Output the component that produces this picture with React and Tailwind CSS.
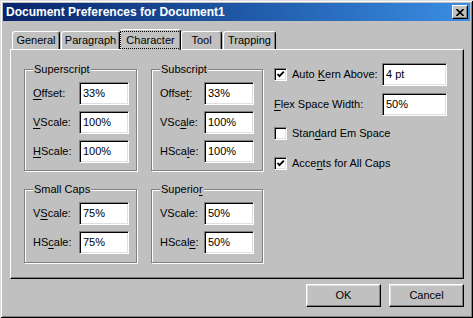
import React from "react";

const font = { fontFamily: '"Liberation Sans", Arial, sans-serif' };

const Field = ({ value, w = "w-[50px]" }) => (
  <div
    className={`${w} h-[23px] bg-white border border-t-[#808080] border-l-[#808080] border-r-white border-b-white shadow-[inset_1px_1px_0_#000,inset_-1px_-1px_0_#dfdfdf] pl-[3px] pt-[4px] text-[11px] leading-[13px] text-black`}
  >
    {value}
  </div>
);

const Check = ({ checked }) => (
  <div className="w-[13px] h-[13px] shrink-0 bg-white border border-t-[#808080] border-l-[#808080] border-r-white border-b-white shadow-[inset_1px_1px_0_#000,inset_-1px_-1px_0_#dfdfdf] flex items-center justify-center">
    {checked && (
      <svg width="9" height="9" viewBox="0 0 9 9">
        <path d="M1.5 4 L3.5 6.2 L7.8 1.6" fill="none" stroke="#000" strokeWidth="1.8" />
      </svg>
    )}
  </div>
);

// label with one underlined letter (mnemonic)
const Mn = ({ text, at }) =>
  at < 0 ? (
    <>{text}</>
  ) : (
    <>
      {text.slice(0, at)}
      <span className="underline underline-offset-[2px]">{text[at]}</span>
      {text.slice(at + 1)}
    </>
  );

const Group = ({ title, titleAt = -1, rows, labelW, h }) => (
  <div
    className={`relative ${h} border border-[#808080] shadow-[1px_1px_0_#fff,inset_1px_1px_0_#fff] pt-[12px] pl-[8px] flex flex-col gap-[6px]`}
  >
    <span className="absolute top-[-8px] left-[8px] px-[1px] bg-[#c0c0c0] text-[11px] leading-[14px]">
      <Mn text={title} at={titleAt} />
    </span>
    {rows.map((r) => (
      <div key={r.label} className="flex items-center">
        <span className={`${labelW} text-[11px] leading-[13px]`}>
          <Mn text={r.label} at={r.at} />
        </span>
        <Field value={r.value} />
      </div>
    ))}
  </div>
);

const Tab = ({ label, w, ml = "" }) => (
  <div
    className={`${w} ${ml} h-[18px] rounded-t-[3px] border-l border-t border-r border-l-white border-t-white border-r-black shadow-[inset_-1px_0_0_#808080] text-[11px] leading-[13px] flex justify-center pt-[2px]`}
  >
    {label}
  </div>
);

const RaisedButton = ({ children }) => (
  <div className="w-[75px] h-[23px] border border-t-white border-l-white border-r-black border-b-black shadow-[inset_-1px_-1px_0_#808080,inset_1px_1px_0_#dfdfdf] flex items-center justify-center text-[11px] leading-[13px]">
    {children}
  </div>
);

export default function App() {
  return (
    <div
      className="w-[473px] h-[318px] bg-[#c0c0c0] p-[3px] text-black shadow-[inset_1px_1px_0_#dfdfdf,inset_-1px_-1px_0_#000,inset_2px_2px_0_#fff,inset_-2px_-2px_0_#808080] overflow-hidden"
      style={font}
    >
      {/* Title bar */}
      <div className="h-[18px] flex items-center justify-between pl-[3px] pr-[2px] bg-linear-to-r from-[#0a246a] to-[#3a8ee4]">
        <span className="text-white font-bold text-[12px] leading-[14px]">
          Document Preferences for Document1
        </span>
        <div className="w-[16px] h-[14px] bg-[#c0c0c0] border border-t-white border-l-white border-r-black border-b-black shadow-[inset_-1px_-1px_0_#808080] flex items-center justify-center">
          <svg width="8" height="7" viewBox="0 0 8 7">
            <path d="M0.5 0 L7.5 7 M7.5 0 L0.5 7" stroke="#000" strokeWidth="1.6" />
          </svg>
        </div>
      </div>

      <div className="pl-[7px] pt-[8px]">
        {/* Tabs */}
        <div className="h-[20px] flex items-end">
          <Tab label="General" w="w-[48px]" ml="ml-[2px]" />
          <Tab label="Paragraph" w="w-[59px]" ml="ml-[1px]" />
          <div className="relative z-10 w-[61px] h-[21px] -mb-[1px] bg-[#c0c0c0] rounded-t-[3px] border-l border-t border-r border-l-white border-t-white border-r-black shadow-[inset_-1px_0_0_#808080] flex justify-center pt-[1px]">
            <span className="h-[18px] px-[5px] border border-dotted border-black text-[11px] leading-[14px] pt-[1px]">
              Character
            </span>
          </div>
          <Tab label="Tool" w="w-[41px]" />
          <Tab label="Trapping" w="w-[53px]" ml="ml-[1px]" />
        </div>

        {/* Panel */}
        <div className="w-[454px] h-[230px] border border-t-white border-l-white border-r-black border-b-black shadow-[inset_-1px_-1px_0_#808080] flex pl-[13px] pt-[13px]">
          <div className="w-[113px] mt-[6px] flex flex-col gap-[18px]">
            <Group
              title="Superscript"
              labelW="w-[46px]"
              h="h-[102px]"
              rows={[
                { label: "Offset:", at: 0, value: "33%" },
                { label: "VScale:", at: 0, value: "100%" },
                { label: "HScale:", at: 0, value: "100%" },
              ]}
            />
            <Group
              title="Small Caps"
              labelW="w-[46px]"
              h="h-[74px]"
              rows={[
                { label: "VScale:", at: 1, value: "75%" },
                { label: "HScale:", at: 2, value: "75%" },
              ]}
            />
          </div>
          <div className="w-[112px] ml-[14px] mt-[6px] flex flex-col gap-[18px]">
            <Group
              title="Subscript"
              labelW="w-[44px]"
              h="h-[102px]"
              rows={[
                { label: "Offset:", at: 5, value: "33%" },
                { label: "VScale:", at: 3, value: "100%" },
                { label: "HScale:", at: 4, value: "100%" },
              ]}
            />
            <Group
              title="Superior"
              titleAt={7}
              labelW="w-[44px]"
              h="h-[74px]"
              rows={[
                { label: "VScale:", at: -1, value: "50%" },
                { label: "HScale:", at: 5, value: "50%" },
              ]}
            />
          </div>

          {/* Right column */}
          <div className="ml-[11px] flex flex-col text-[11px] leading-[13px]">
            <div className="h-[23px] flex items-center">
              <Check checked />
              <span className="ml-[5px] w-[90px]">
                <Mn text="Auto Kern Above:" at={5} />
              </span>
              <Field value="4 pt" w="w-[65px]" />
            </div>
            <div className="h-[23px] mt-[7px] flex items-center">
              <span className="w-[108px]">
                <Mn text="Flex Space Width:" at={0} />
              </span>
              <Field value="50%" w="w-[65px]" />
            </div>
            <div className="h-[13px] mt-[11px] flex items-center">
              <Check />
              <span className="ml-[5px]">
                <Mn text="Standard Em Space" at={4} />
              </span>
            </div>
            <div className="h-[13px] mt-[17px] flex items-center">
              <Check checked />
              <span className="ml-[5px]">
                <Mn text="Accents for All Caps" at={4} />
              </span>
            </div>
          </div>
        </div>
      </div>

      {/* Buttons */}
      <div className="mt-[5px] pr-[6px] flex justify-end gap-[8px]">
        <RaisedButton>OK</RaisedButton>
        <RaisedButton>Cancel</RaisedButton>
      </div>
    </div>
  );
}
